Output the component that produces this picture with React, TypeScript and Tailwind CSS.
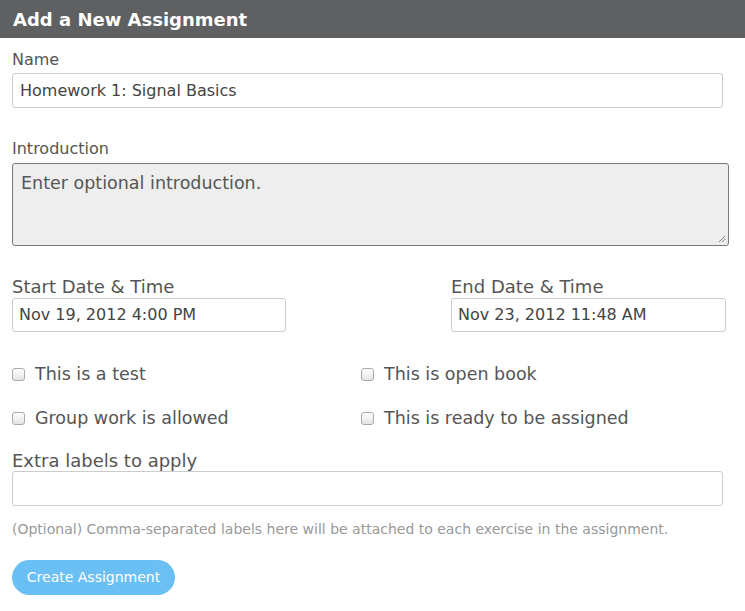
import React from 'react';

const font = { fontFamily: '"DejaVu Sans", Verdana, sans-serif' };

function Check({ label }: { label: string }) {
  return (
    <label className="flex items-center h-[22px]">
      <span className="inline-block w-[13px] h-[13px] rounded-[3px] border border-[#a9a9a9] bg-gradient-to-b from-[#ffffff] to-[#e4e4e4] mr-[10px]" />
      <span className="text-[17.5px] text-[#555]">{label}</span>
    </label>
  );
}

export default function App() {
  return (
    <div className="w-[745px] h-[611px] bg-white overflow-hidden" style={font}>
      {/* Header */}
      <div className="h-[38px] bg-[#5f6062] flex items-center px-[13px]">
        <h1 className="text-[18px] font-bold text-white">Add a New Assignment</h1>
      </div>

      <div className="px-[12px] pt-[11px]">
        {/* Name */}
        <div className="text-[16px] text-[#555] h-[22px] leading-[22px]">Name</div>
        <div className="mt-[2px] w-[711px] h-[35px] rounded-[3px] border border-[#cccccc] flex items-center px-[7px] text-[16px] text-[#444]">
          Homework 1: Signal Basics
        </div>

        {/* Introduction */}
        <div className="mt-[30px] text-[16px] text-[#555] h-[22px] leading-[22px]">Introduction</div>
        <div className="relative mt-[3px] w-[717px] h-[83px] rounded-[3px] border border-[#7a7a7a] bg-[#eeeeee] px-[8px] pt-[8px] text-[17.5px] leading-[22px] text-[#555]">
          Enter optional introduction.
          <svg className="absolute right-[2px] bottom-[2px]" width="8" height="8" viewBox="0 0 8 8">
            <line x1="1" y1="7" x2="7" y2="1" stroke="#888" strokeWidth="1" />
            <line x1="4" y1="7" x2="7" y2="4" stroke="#888" strokeWidth="1" />
          </svg>
        </div>

        {/* Dates */}
        <div className="mt-[30px] flex">
          <div className="w-[439px]">
            <div className="text-[18px] text-[#555] h-[22px] leading-[22px]">Start Date & Time</div>
            <div className="w-[274px] h-[34px] rounded-[3px] border border-[#cccccc] flex items-center px-[6px] text-[16px] text-[#444]">
              Nov 19, 2012 4:00 PM
            </div>
          </div>
          <div>
            <div className="text-[18px] text-[#555] h-[22px] leading-[22px]">End Date & Time</div>
            <div className="w-[275px] h-[34px] rounded-[3px] border border-[#cccccc] flex items-center px-[6px] text-[16px] text-[#444]">
              Nov 23, 2012 11:48 AM
            </div>
          </div>
        </div>

        {/* Checkboxes */}
        <div className="mt-[31px] grid grid-cols-[349px_1fr] gap-y-[22px]">
          <Check label="This is a test" />
          <Check label="This is open book" />
          <Check label="Group work is allowed" />
          <Check label="This is ready to be assigned" />
        </div>

        {/* Extra labels */}
        <div className="mt-[22px] text-[18px] text-[#555] h-[20px] leading-[20px]">Extra labels to apply</div>
        <div className="w-[711px] h-[35px] rounded-[3px] border border-[#cccccc]" />
        <p className="mt-[13px] text-[14px] leading-[20px] text-[#999]">
          (Optional) Comma-separated labels here will be attached to each exercise in the assignment.
        </p>

        <button className="mt-[21px] w-[163px] h-[35px] rounded-full bg-[#6ac0f5] text-white text-[14px]">
          Create Assignment
        </button>
      </div>
    </div>
  );
}
